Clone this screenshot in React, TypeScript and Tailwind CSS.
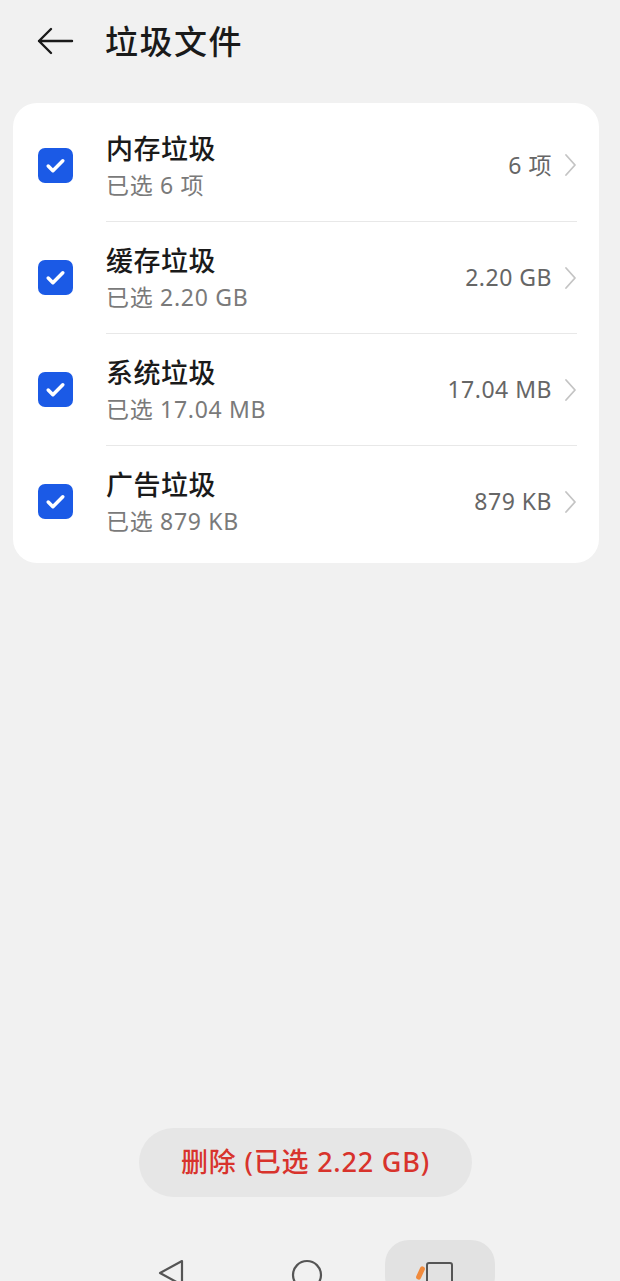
const items = [
  { title: "内存垃圾", sub: "已选 6 项", value: "6 项" },
  { title: "缓存垃圾", sub: "已选 2.20 GB", value: "2.20 GB" },
  { title: "系统垃圾", sub: "已选 17.04 MB", value: "17.04 MB" },
  { title: "广告垃圾", sub: "已选 879 KB", value: "879 KB" },
];

const font = { fontFamily: '"Noto Sans", "Noto Sans CJK SC", sans-serif' };

const CheckBox = () => (
  <div className="w-[35px] h-[35px] rounded-[7px] bg-[#1b5ae6] flex items-center justify-center shrink-0">
    <svg width="25" height="25" viewBox="0 0 24 24" fill="none">
      <path d="M5 12.5l4.5 4.5L19 7.5" stroke="white" strokeWidth="3.4" strokeLinecap="round" strokeLinejoin="round" />
    </svg>
  </div>
);

const Chevron = () => (
  <svg className="ml-[12px] shrink-0" width="13" height="24" viewBox="0 0 13 24" fill="none">
    <path d="M2 2l9 10-9 10" stroke="#c4c4c4" strokeWidth="1.8" strokeLinecap="round" strokeLinejoin="round" />
  </svg>
);

const App = () => {
  return (
    <div className="relative w-[620px] h-[1281px] bg-[#f1f1f1] overflow-hidden flex flex-col" style={font}>
      {/* Header */}
      <div className="h-[82px] flex items-center pl-[36px]">
        <svg width="38" height="30" viewBox="0 0 38 30" fill="none">
          <path d="M36 15H3M15 3L3 15l12 12" stroke="#1a1a1a" strokeWidth="2.4" strokeLinecap="round" strokeLinejoin="round" />
        </svg>
        <h1 className="ml-[31px] text-[33px] tracking-[1.5px] font-medium text-[#1a1a1a] leading-none">垃圾文件</h1>
      </div>

      {/* List card */}
      <div className="ml-[13px] w-[586px] mt-[21px] bg-white rounded-[24px] py-[6px]">
        {items.map((it, i) => (
          <div key={it.title} className="h-[112px] flex items-center pl-[25px]">
            <CheckBox />
            <div
              className={`ml-[33px] mr-[22px] flex-1 h-full flex items-center ${
                i > 0 ? "border-t border-[#e8e8e8]" : ""
              }`}
            >
              <div className="flex-1 flex flex-col justify-center">
                <span className="text-[27px] tracking-[0.5px] text-[#1a1a1a] leading-[36px] font-medium">{it.title}</span>
                <span className="text-[23px] tracking-[0.7px] text-[#7a7a7a] leading-[30px] mt-[3px]">{it.sub}</span>
              </div>
              <span className="text-[23px] tracking-[0.5px] text-[#666666]">{it.value}</span>
              <Chevron />
            </div>
          </div>
        ))}
      </div>

      <div className="flex-1" />

      {/* Delete button */}
      <div className="flex mb-[43px] pl-[139px]">
        <button className="w-[333px] h-[69px] rounded-full bg-[#e6e6e6] text-[#d8332c] text-[27px] tracking-[0.8px] font-medium">
          删除 (已选 2.22 GB)
        </button>
      </div>

      {/* Navigation bar */}
      <div className="h-[41px] relative">
        <svg className="absolute left-[156px] top-[18px]" width="30" height="30" viewBox="0 0 30 30" fill="none">
          <path d="M26 3L4 15l22 12z" stroke="#555" strokeWidth="2.2" strokeLinejoin="round" />
        </svg>
        <svg className="absolute left-[290px] top-[18px]" width="34" height="34" viewBox="0 0 34 34" fill="none">
          <circle cx="17" cy="17" r="14" stroke="#555" strokeWidth="2.2" />
        </svg>
        <div className="absolute left-[385px] top-0 w-[110px] h-[60px] rounded-[24px] bg-[#e2e2e2]">
          <div className="absolute left-[41px] top-[22px] w-[27px] h-[30px] border-[2.2px] border-[#555] rounded-[3px]" />
          <div className="absolute left-[33px] top-[26px] w-[5px] h-[14px] bg-[#f08a3c] rounded-full rotate-[25deg]" />
        </div>
      </div>
    </div>
  );
};

export default App;
